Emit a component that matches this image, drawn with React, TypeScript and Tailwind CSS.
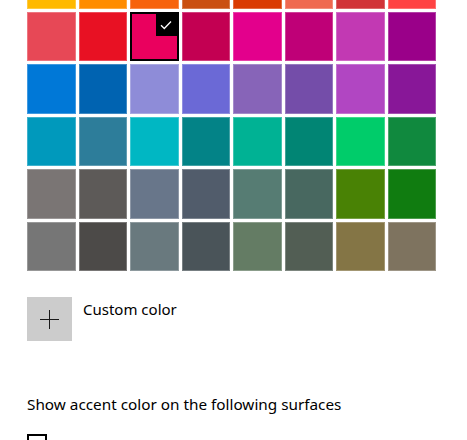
import React from "react";

const rows: string[][] = [
  ["#FFB900", "#FF8C00", "#F7630C", "#CA5010", "#DA3B01", "#EF6950", "#D13438", "#FF4343"],
  ["#E74856", "#E81123", "#EA005E", "#C30052", "#E3008C", "#BF0077", "#C239B3", "#9A0089"],
  ["#0078D7", "#0063B1", "#8E8CD8", "#6B69D6", "#8764B8", "#744DA9", "#B146C2", "#881798"],
  ["#0099BC", "#2D7D9A", "#00B7C3", "#038387", "#00B294", "#018574", "#00CC6A", "#10893E"],
  ["#7A7574", "#5D5A58", "#68768A", "#515C6B", "#567C73", "#486860", "#498205", "#107C10"],
  ["#767676", "#4C4A48", "#69797E", "#4A5459", "#647C64", "#525E54", "#847545", "#7E735F"],
];

function Swatch({ color, selected }: { color: string; selected: boolean }) {
  if (selected) {
    return (
      <div className="relative h-[49.5px] border-2 border-black" style={{ backgroundColor: color }}>
        <div className="absolute right-0 top-0 flex h-[22px] w-[21px] items-center justify-center bg-black">
          <svg width="12" height="10" viewBox="0 0 12 10" fill="none">
            <path d="M1 5.2 L4.3 8.5 L11 1.5" stroke="white" strokeWidth="1.3" />
          </svg>
        </div>
      </div>
    );
  }
  return (
    <div
      className="h-[49.5px] shadow-[inset_0_0_0_1px_rgba(255,255,255,0.25)]"
      style={{ backgroundColor: color }}
    />
  );
}

export default function App() {
  return (
    <div
      className="h-[440px] w-[467px] overflow-hidden bg-white pl-[27px] text-black"
      style={{ fontFamily: '"Noto Sans", "Open Sans", sans-serif' }}
    >
      <div className="mt-[-41px] grid w-[409px] grid-cols-8 gap-x-[3px] gap-y-[3px]">
        {rows.map((r, ri) =>
          r.map((c, ci) => <Swatch key={ri + "-" + ci} color={c} selected={ri === 1 && ci === 2} />)
        )}
      </div>

      <div className="mt-[26px] flex items-start">
        <div className="flex h-[44px] w-[45px] items-center justify-center bg-[#cccccc]">
          <svg width="19" height="19" viewBox="0 0 19 19">
            <path d="M9.5 0 V19 M0 9.5 H19" stroke="#1a1a1a" strokeWidth="1" />
          </svg>
        </div>
        <div className="ml-[11px] mt-[2px] text-[15px] leading-[20px]">Custom color</div>
      </div>

      <div className="mt-[53px] text-[15.3px] leading-[20px]">Show accent color on the following surfaces</div>

      <div className="mt-[20px] h-[20px] w-[20px] border-2 border-black" />
    </div>
  );
}
